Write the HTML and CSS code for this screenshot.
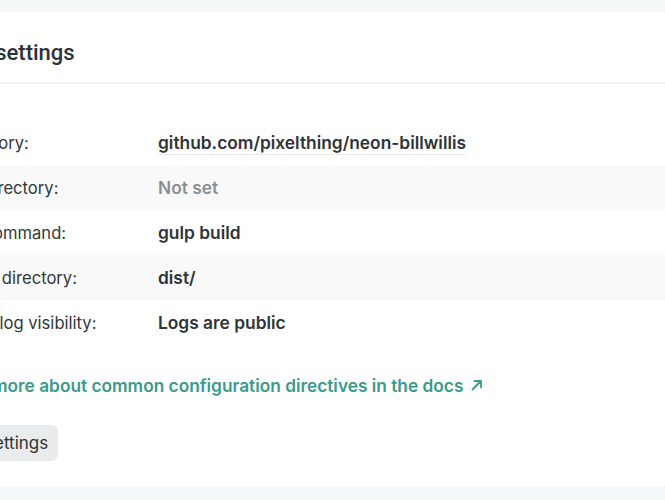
FILE: index.html
```html
<!DOCTYPE html>
<html lang="en">
<head>
<meta charset="utf-8">
<title>Build settings</title>
<link rel="stylesheet" href="styles.css">
</head>
<body>
<section class="card">
  <header class="card-header">
    <h2 class="card-title">Build settings</h2>
  </header>
  <div class="card-body">
    <dl class="settings">
      <div class="row">
        <dt class="label">Repository:</dt>
        <dd class="value"><a class="repo" href="#">github.com/pixelthing/neon-billwillis</a></dd>
      </div>
      <div class="row alt">
        <dt class="label">Base directory:</dt>
        <dd class="value muted">Not set</dd>
      </div>
      <div class="row">
        <dt class="label">Build command:</dt>
        <dd class="value">gulp build</dd>
      </div>
      <div class="row alt">
        <dt class="label">Publish directory:</dt>
        <dd class="value">dist/</dd>
      </div>
      <div class="row">
        <dt class="label">Deploy log visibility:</dt>
        <dd class="value">Logs are public</dd>
      </div>
    </dl>
    <p class="docs"><a class="docs-link" href="#">Learn more about common configuration directives in the docs <svg class="ext" width="12" height="12" viewBox="0 0 12 12" aria-hidden="true"><path d="M1.5 10.5 L10 2 M3.5 2 H10 V8.5" fill="none" stroke="currentColor" stroke-width="1.8" stroke-linecap="round" stroke-linejoin="round"/></svg></a></p>
    <button class="btn" type="button">Edit settings</button>
  </div>
</section>
</body>
</html>
```

FILE: styles.css
```css
html, body {
  margin: 0;
  padding: 0;
}
body {
  background: #f5f8f9;
  font-family: Inter, "Noto Sans", sans-serif;
  color: #2e3338;
  overflow: hidden;
}
.card {
  margin: 12px 0 0 -84px;
  width: 750px;
  background: #fff;
  box-shadow: 0 2px 3px rgba(0, 0, 0, 0.08);
  border-radius: 4px;
}
.card-header {
  height: 72px;
  box-sizing: border-box;
  display: flex;
  align-items: center;
  padding: 10px 24px 0;
  border-bottom: 2px solid #f2f3f3;
}
.card-title {
  margin: 0;
  font-family: Roboto, sans-serif;
  font-weight: 500;
  font-size: 22px;
  color: #2c3238;
}
.card-body {
  padding: 36px 0 26px;
}
.settings {
  margin: 0;
}
.row {
  display: grid;
  grid-template-columns: 218px 1fr;
  align-items: center;
  height: 45px;
  padding: 0 24px;
}
.row.alt {
  background: #f9f9f9;
}
.label, .value {
  margin: 0;
}
.label {
  font-size: 16.6px;
  font-weight: 400;
  color: #33383d;
}
.value {
  font-size: 17.35px;
  font-weight: 600;
  color: #2e3338;
}
.value.muted {
  color: #8a8f93;
}
.repo {
  color: inherit;
  text-decoration: none;
  border-bottom: 1px solid #e6e8ea;
  padding-bottom: 1px;
}
.docs {
  margin: 30px 0 0;
  padding: 0 24px;
  font-size: 17.3px;
  font-weight: 600;
}
.docs-link {
  color: #3b9a8b;
  text-decoration: none;
}
.ext {
  margin-left: 3px;
  vertical-align: 1px;
}
.btn {
  margin: 29px 0 0 24px;
  height: 36px;
  padding: 0 10px;
  border: 0;
  border-radius: 6px;
  background: #e9ebed;
  color: #2e3338;
  font-family: Inter, sans-serif;
  font-size: 17px;
  font-weight: 400;
}
```
